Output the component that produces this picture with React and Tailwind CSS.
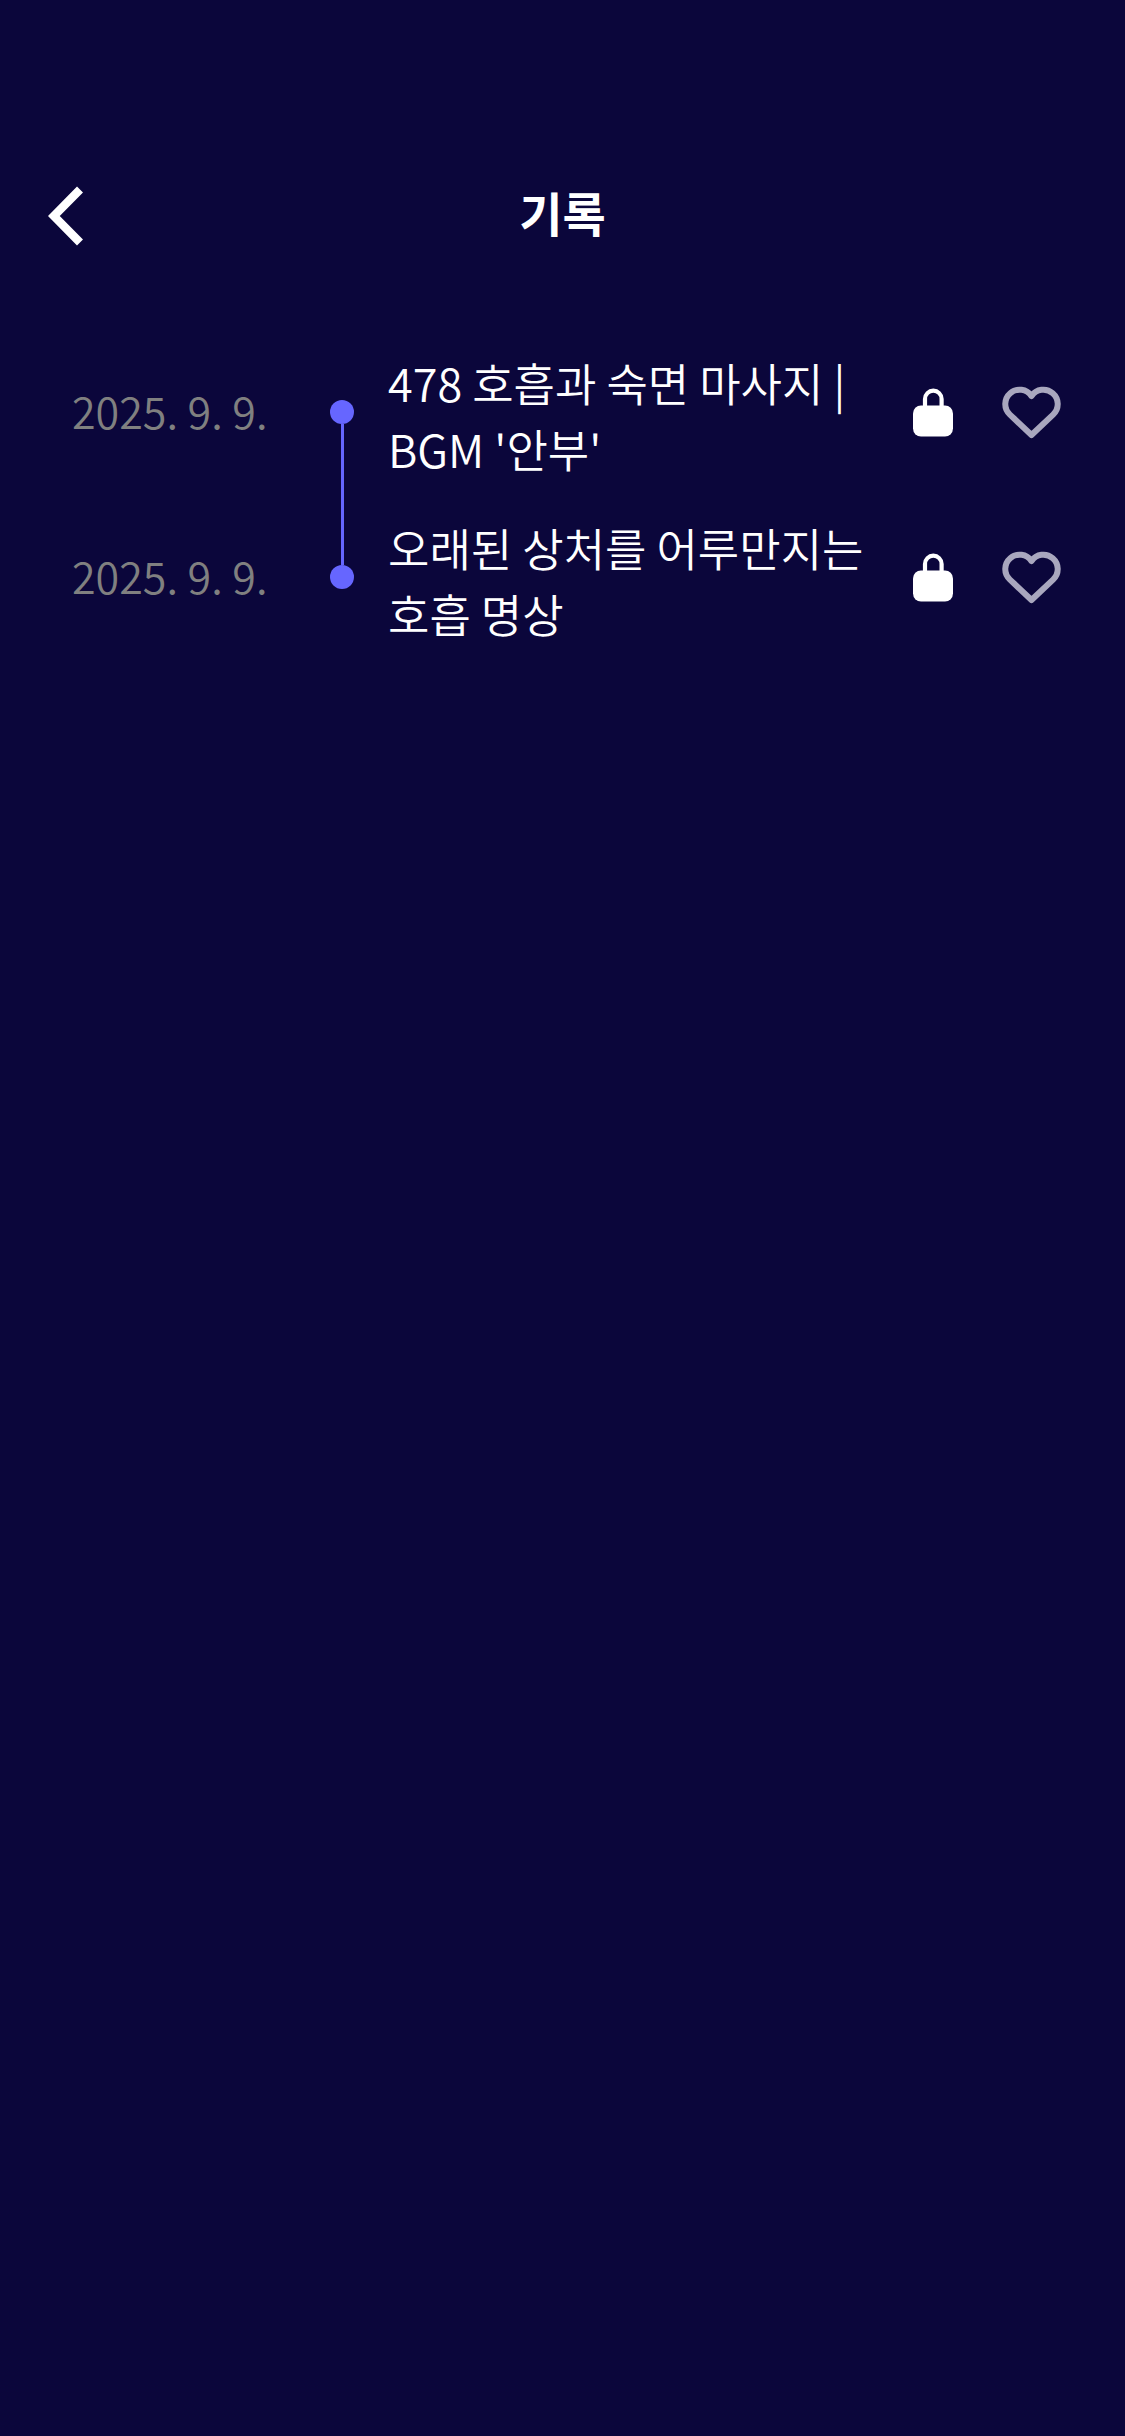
import { useState } from 'react'

const RECORDS = [
  { id: 1, date: '2025. 9. 9.', title: "478 호흡과 숙면 마사지 | BGM '안부'" },
  { id: 2, date: '2025. 9. 9.', title: '오래된 상처를 어루만지는 호흡 명상' },
]

// ── Icons ───────────────────────────────────────────────────────

function BackIcon() {
  return (
    <svg width="36" height="60" viewBox="0 0 36 60" fill="none" stroke="currentColor" strokeWidth="8.4" aria-hidden="true">
      <path d="M32 3.5L5.8 30L32 56.5" />
    </svg>
  )
}

function LockIcon() {
  return (
    <svg width="40" height="60" viewBox="0 0 40 60" role="img" aria-label="잠김">
      <rect x="0" y="23.5" width="40" height="31" rx="8" fill="currentColor" />
      <path d="M12 26V17a8.3 8.3 0 0 1 16.6 0V26" fill="none" stroke="currentColor" strokeWidth="4.2" />
    </svg>
  )
}

function HeartIcon({ filled }) {
  return (
    <svg
      width="60"
      height="60"
      viewBox="0 0 60 60"
      fill={filled ? 'currentColor' : 'none'}
      stroke="currentColor"
      strokeWidth="6"
      strokeLinejoin="round"
      aria-hidden="true"
    >
      <path d="M30.5 14A14.35 14.35 0 1 0 8.9 32.6L30.5 53L52.1 32.6A14.35 14.35 0 1 0 30.5 14Z" />
    </svg>
  )
}

// ── Record row ──────────────────────────────────────────────────

function RecordRow({ record, isFirst, isLast }) {
  const [liked, setLiked] = useState(false)

  return (
    <li className="flex items-center min-h-[165px]">
      <time className="w-[258px] shrink-0 pb-1 text-[43px] leading-[66px] font-[350] text-[#808080]">{record.date}</time>

      {/* Timeline */}
      <div className="self-stretch w-6 shrink-0 flex flex-col items-center">
        <span className={`w-[3px] flex-1 ${isFirst ? '' : 'bg-[#6666ff]'}`} />
        <span className="size-6 rounded-full bg-[#6666ff]" />
        <span className={`w-[3px] flex-1 ${isLast ? '' : 'bg-[#6666ff]'}`} />
      </div>

      <p className="flex-1 ml-[34px] mr-4 pt-2 text-[45px] leading-[66px] font-[350] text-white break-keep">{record.title}</p>

      <div className="flex items-center gap-12 shrink-0 text-white">
        <LockIcon />
        <button
          type="button"
          aria-label="좋아요"
          aria-pressed={liked}
          onClick={() => setLiked(!liked)}
          className="text-[#a9a7be]"
        >
          <HeartIcon filled={liked} />
        </button>
      </div>
    </li>
  )
}

// ── Main component ──────────────────────────────────────────────

export default function App() {
  return (
    <div className="min-h-screen bg-[#0b063b] font-['Noto_Sans_CJK_KR',sans-serif]">
      <header className="grid grid-cols-[1fr_auto_1fr] items-center pt-[150px] px-12 h-[282px]">
        <button type="button" aria-label="뒤로" className="justify-self-start text-white">
          <BackIcon />
        </button>
        <h1 className="pb-2 text-[47px] leading-[66px] font-bold text-white">기록</h1>
      </header>

      <main className="pt-[47px] pl-[72px] pr-16">
        <ul>
          {RECORDS.map((r, i) => (
            <RecordRow key={r.id} record={r} isFirst={i === 0} isLast={i === RECORDS.length - 1} />
          ))}
        </ul>
      </main>
    </div>
  )
}
